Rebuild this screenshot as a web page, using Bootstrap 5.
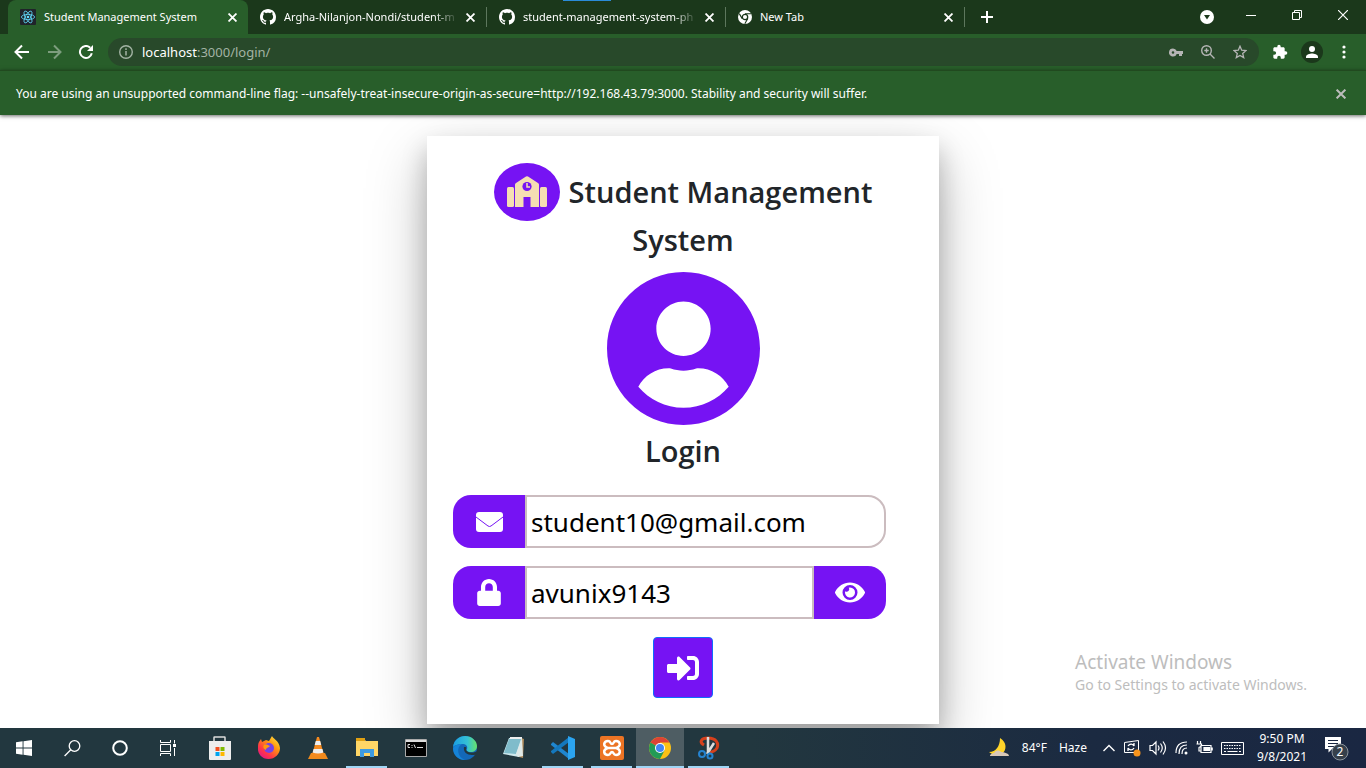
<!DOCTYPE html>
<html lang="en">
<head>
<meta charset="utf-8">
<meta name="viewport" content="width=device-width, initial-scale=1">
<title>Student Management System</title>
<link href="https://cdn.jsdelivr.net/npm/bootstrap@5.3.0/dist/css/bootstrap.min.css" rel="stylesheet">
<style>
  :root { --purple: #7613f3; --frame: #1b381b; --toolbar: #285e2a; }
  body { font-family: "Noto Sans", "Open Sans", sans-serif; font-size: 12px; line-height: 16px; }
  button { background: none; border: 0; padding: 0; color: inherit; display: inline-flex; align-items: center; justify-content: center; }
  svg { display: block; flex: none; }
  .tabstrip { background: var(--frame); color: #fff; height: 34px; padding-left: 8px; }
  .tab-item { width: 238px; padding: 0 11px 0 12px; color: #fff; font-size: 11px; }
  .tab-item a { color: inherit; text-decoration: none; white-space: nowrap; margin-left: 8px; flex: 1 1 0; min-width: 0; }
  .tab-item.current { background: var(--toolbar); border-radius: 8px 8px 0 0; width: 240px; }
  .tab-item.clipped a { -webkit-mask-image: linear-gradient(90deg, #000 calc(100% - 24px), transparent); mask-image: linear-gradient(90deg, #000 calc(100% - 24px), transparent); }
  .tab-sep { width: 1px; height: 20px; background: #5d775d; }
  .activity { left: 563px; top: 0; width: 48px; height: 1px; background: #2a8bd8; }
  .winctl button { width: 46px; height: 30px; }
  .winctl .tab-search { width: 42px; }
  .toolbar { background: var(--toolbar); color: #fff; height: 36px; padding: 0 12px; }
  .omnibox { background: #28492a; border-radius: 14px; height: 28px; padding: 0 12px 0 10px; margin: 0 13px 0 14px; }
  .omni-icons { gap: 18px; }
  .addr { font-size: 13px; color: #fff; margin-left: 8px; }
  .addr span { color: #a3b3a4; }
  .avatar { width: 22px; height: 22px; border-radius: 50%; background: #1b381b; margin: 0 19px 0 13px; }
  .infobar { background: var(--toolbar); color: #fff; border-top: 1px solid #21491f; height: 45px; padding: 1px 16px 0; box-shadow: 0 1px 4px rgba(0,0,0,.6); z-index: 2; }
  main { overflow: hidden; background: #fff; }
  .login-card { width: 512px; background: #fff; margin-top: 21px; margin-bottom: 4px; padding: 27px 26px 26px; box-shadow: 0 24px 56px rgba(0,0,0,.25), 0 14px 24px rgba(0,0,0,.22); }
  .login-card h1, .login-card h2 { font-family: "Open Sans", "Noto Sans", sans-serif; font-size: 29px; line-height: 36px; font-weight: 600; color: #212529; margin: 0; }
  .login-card h1 { line-height: 58px; }
  .login-card h1 .second { display: block; line-height: 38px; }
  .login-card h2 { margin: 8px 0; }
  .portrait { margin-top: 13px; }
  .school { width: 66px; height: 58px; border-radius: 50%; background: var(--purple); margin-right: 9px; }
  .fields { gap: 18px; padding-top: 18px; }
  .field { height: 53px; width: 433px; }
  .field .cap { width: 72px; background: var(--purple); color: #fff; }
  .field .cap-start { border-radius: 18px 0 0 18px; }
  .field .cap-end { border-radius: 0 18px 18px 0; }
  .field input { flex: 1; min-width: 0; border: 2px solid #cbbcbf; padding: 0 4px; font-size: 26px; color: #000; outline: 0; background: #fff; }
  .field .round-end { border-radius: 0 18px 18px 0; }
  .go { width: 60px; height: 61px; background: var(--purple); border: 1px solid #0d6efd; border-radius: 4px; color: #fff; }
  .watermark { right: 59px; bottom: 33px; color: #bdbdbd; font-size: 14px; line-height: 20px; }
  .watermark strong { display: block; font-weight: 400; font-size: 19px; line-height: 26px; }
  .taskbar { height: 40px; background: linear-gradient(90deg, #22373f 0%, #22373f 55%, #1b2a41 80%, #1a2742 100%); color: #fff; }
  .tb-item { width: 49px; height: 40px; }
  .tb-system { padding-right: 3px; }
  .tb-system .tb-item { width: 48px; }
  .tb-open { box-shadow: inset 0 -2px #9fd5f5; width: 41px; margin: 0 4px; }
  .tb-active { background-color: #4e5d63; width: 48px; margin: 0; }
  .weather { gap: 12px; }
  .clock { line-height: 18px; width: 60px; }
  .notes { margin-left: 12px; margin-right: 16px; }
</style>
</head>
<body class="min-vh-100 d-flex flex-column">
<svg width="0" height="0" class="position-absolute" aria-hidden="true">
  <symbol id="x" viewBox="0 0 8 8"><path d="M.5.5l7 7m0-7l-7 7" stroke="currentColor" stroke-width="1.6"/></symbol>
  <symbol id="github" viewBox="0 0 16 16"><path fill="currentColor" d="M8 0C3.58 0 0 3.58 0 8c0 3.54 2.29 6.53 5.47 7.59.4.07.55-.17.55-.38 0-.19-.01-.82-.01-1.49-2.01.37-2.53-.49-2.69-.94-.09-.23-.48-.94-.82-1.13-.28-.15-.68-.52-.01-.53.63-.01 1.08.58 1.23.82.72 1.21 1.87.87 2.33.66.07-.52.28-.87.51-1.07-1.78-.2-3.64-.89-3.64-3.95 0-.87.31-1.59.82-2.15-.08-.2-.36-1.02.08-2.12 0 0 .67-.21 2.2.82.64-.18 1.32-.27 2-.27s1.36.09 2 .27c1.53-1.04 2.2-.82 2.2-.82.44 1.1.16 1.92.08 2.12.51.56.82 1.27.82 2.15 0 3.07-1.87 3.75-3.65 3.95.29.25.54.73.54 1.48 0 1.07-.01 1.93-.01 2.2 0 .21.15.46.55.38A8.01 8.01 0 0 0 16 8c0-4.42-3.58-8-8-8z"/></symbol>
</svg>

<header class="position-relative">
  <div class="tabstrip d-flex align-items-center">
    <div class="tab-item current d-flex align-items-center h-100">
      <svg width="16" height="16" viewBox="0 0 16 16"><rect width="16" height="16" rx="1" fill="#20232a"/><g fill="none" stroke="#61dafb" stroke-width=".8"><ellipse cx="8" cy="8" rx="6.6" ry="2.6"/><ellipse cx="8" cy="8" rx="6.6" ry="2.6" transform="rotate(60 8 8)"/><ellipse cx="8" cy="8" rx="6.6" ry="2.6" transform="rotate(120 8 8)"/></g><circle cx="8" cy="8" r="1.3" fill="#61dafb"/></svg>
      <a href="#">Student Management System</a>
      <button type="button" aria-label="Close tab"><svg width="9" height="9"><use href="#x"/></svg></button>
    </div>
    <div class="tab-item clipped d-flex align-items-center h-100">
      <svg width="16" height="16"><use href="#github"/></svg>
      <a href="#">Argha-Nilanjon-Nondi/student-m</a>
      <button type="button" class="ms-2" aria-label="Close tab"><svg width="9" height="9"><use href="#x"/></svg></button>
    </div>
    <span class="tab-sep"></span>
    <div class="tab-item clipped d-flex align-items-center h-100">
      <svg width="16" height="16"><use href="#github"/></svg>
      <a href="#">student-management-system-ph</a>
      <button type="button" class="ms-2" aria-label="Close tab"><svg width="9" height="9"><use href="#x"/></svg></button>
    </div>
    <span class="tab-sep"></span>
    <div class="tab-item d-flex align-items-center h-100">
      <svg width="14" height="14" viewBox="0 0 14 14"><circle cx="7" cy="7" r="7" fill="#fff"/><circle cx="7" cy="7" r="2.7" fill="#fff" stroke="#1b381b" stroke-width="1.3"/><path d="M7 3.8h6M4.2 8.6L1.3 3.6M9.8 8.6L6.8 13.8" stroke="#1b381b" stroke-width="1.1"/></svg>
      <a href="#">New Tab</a>
      <button type="button" aria-label="Close tab"><svg width="9" height="9"><use href="#x"/></svg></button>
    </div>
    <span class="tab-sep"></span>
    <button type="button" class="ms-3" aria-label="New tab"><svg width="12" height="12" viewBox="0 0 12 12"><path d="M6 0v12M0 6h12" stroke="#fff" stroke-width="2"/></svg></button>
    <div class="winctl d-flex ms-auto align-items-center h-100">
      <button type="button" class="tab-search" aria-label="Search tabs"><svg width="14" height="14" viewBox="0 0 14 14"><circle cx="7" cy="7" r="7" fill="#fff"/><path d="M4 5h6L7 9.5z" fill="#1b381b"/></svg></button>
      <button type="button" class="align-self-start" aria-label="Minimize"><svg width="10" height="10"><path d="M0 5.5h10" stroke="#fff"/></svg></button>
      <button type="button" class="align-self-start" aria-label="Restore"><svg width="10" height="10" fill="none" stroke="#fff"><path d="M.5 2.5h7v7h-7zM2.5 2.5v-2h7v7h-2"/></svg></button>
      <button type="button" class="align-self-start" aria-label="Close"><svg width="10" height="10"><path d="M0 0l10 10M10 0L0 10" stroke="#fff" stroke-width="1.2"/></svg></button>
    </div>
    <span class="activity position-absolute"></span>
  </div>
  <nav class="toolbar d-flex align-items-center">
    <button type="button" class="me-3" aria-label="Back"><svg width="20" height="16" viewBox="0 0 20 16" fill="none" stroke="#fff" stroke-width="2"><path d="M17 8H4M10 1.5L3.5 8l6.500 6.500"/></svg></button>
    <button type="button" class="me-3" aria-label="Forward"><svg width="14" height="16" viewBox="0 0 14 16" fill="none" stroke="#7d9d7e" stroke-width="2"><path d="M0 8h12M6 1.500L12.500 8 6 14.500"/></svg></button>
    <button type="button" aria-label="Reload"><svg width="16" height="14" viewBox="0 0 16 14"><path d="M13.800 8.300A6 6 0 1 1 12.200 2.700" fill="none" stroke="#fff" stroke-width="2"/><path d="M15 0v6H9z" fill="#fff"/></svg></button>
    <div class="omnibox d-flex align-items-center flex-grow-1">
      <svg width="16" height="14" viewBox="0 0 16 14"><circle cx="8" cy="7" r="6.300" fill="none" stroke="#a3b3a4" stroke-width="1.400"/><path d="M8 6v4.500M8 3.300v1.600" stroke="#a3b3a4" stroke-width="1.500"/></svg>
      <div class="addr me-auto">localhost<span>:3000/login/</span></div>
      <div class="omni-icons d-flex align-items-center">
        <svg width="14" height="9" viewBox="0 0 14 9"><path fill="#b5b5b5" fill-rule="evenodd" d="M4 .500a4 4 0 1 0 3.700 5.400H10V8h3V5.900h1V3.100H7.700A4 4 0 0 0 4 .500zM4 3.200a1.300 1.300 0 1 1 0 2.600 1.300 1.300 0 0 1 0-2.600z"/></svg>
        <svg width="14" height="14" fill="none" stroke="#b5b5b5" stroke-width="1.400"><circle cx="5.500" cy="5.500" r="4.800"/><path d="M9 9l4.500 4.500M5.500 3.300v4.400M3.300 5.500h4.400"/></svg>
        <svg width="14" height="14" viewBox="0 0 14 14" fill="none" stroke="#b5b5b5" stroke-width="1.300"><path d="M7 1.200l1.700 4 4.300.400-3.300 2.800 1 4.200L7 10.400l-3.700 2.200 1-4.200L1 5.600l4.300-.400z"/></svg>
      </div>
    </div>
    <button type="button" aria-label="Extensions"><svg width="16" height="16" viewBox="0 0 24 24"><path fill="#fff" d="M20.500 11H19V7c0-1.100-.900-2-2-2h-4V3.500a2.500 2.500 0 0 0-5 0V5H4c-1.100 0-2 .900-2 2v3.800h1.500a2.700 2.700 0 0 1 0 5.400H2V20c0 1.100.900 2 2 2h3.800v-1.500a2.700 2.700 0 0 1 5.400 0V22H17c1.100 0 2-.900 2-2v-4h1.500a2.500 2.500 0 0 0 0-5z"/></svg></button>
    <button type="button" class="avatar" aria-label="Profile"><svg width="12" height="12"><circle cx="6" cy="3" r="3" fill="#fff"/><path d="M0 12v-1.500C0 8.500 4 7.400 6 7.400s6 1.100 6 3.100V12z" fill="#fff"/></svg></button>
    <button type="button" class="me-2" aria-label="Menu"><svg width="4" height="14" fill="#fff"><circle cx="2" cy="2" r="1.600"/><circle cx="2" cy="7" r="1.600"/><circle cx="2" cy="12" r="1.600"/></svg></button>
  </nav>
  <div class="infobar d-flex align-items-center justify-content-between position-relative">
    <span>You are using an unsupported command-line flag: --unsafely-treat-insecure-origin-as-secure=http://192.168.43.79:3000. Stability and security will suffer.</span>
    <button type="button" class="me-1" aria-label="Dismiss"><svg width="10" height="10" color="#bcbcbc"><use href="#x"/></svg></button>
  </div>
</header>

<main class="flex-grow-1 d-flex justify-content-center align-items-start position-relative">
  <form class="login-card d-flex flex-column align-items-center text-center">
    <h1>
      <span class="d-flex align-items-center">
        <span class="school d-flex align-items-center justify-content-center">
          <svg width="40" height="32" viewBox="0 0 40 32"><g fill="#f5deb3"><rect x="0" y="11" width="7" height="20" rx="1.500"/><rect x="33" y="11" width="7" height="20" rx="1.500"/><path d="M8 31V8.500Q8 7.500 9 7L19 .500q1-.600 2 0L31 7q1 .500 1 1.500V31h-8.500v-10h-7V31z"/></g><circle cx="20" cy="10.500" r="4.600" fill="#7613f3"/><path d="M20 7v4h3" fill="none" stroke="#f5deb3" stroke-width="1.500"/></svg>
        </span>Student Management</span>
      <span class="second">System</span>
    </h1>
    <svg class="portrait" width="153" height="153" viewBox="0 8 496 496"><path fill="#7613f3" d="M248 8C111 8 0 119 0 256s111 248 248 248 248-111 248-248S385 8 248 8zm0 96c48.600 0 88 39.400 88 88s-39.400 88-88 88-88-39.400-88-88 39.400-88 88-88zm0 344c-58.700 0-111.300-26.600-146.500-68.200 18.800-35.400 55.600-59.800 98.500-59.800 2.400 0 4.800.4 7.100 1.100 13 4.200 26.600 6.900 40.900 6.900 14.300 0 28-2.700 40.900-6.900 2.300-.7 4.700-1.100 7.100-1.100 42.900 0 79.700 24.400 98.500 59.800C359.300 421.400 306.700 448 248 448z"/></svg>
    <h2>Login</h2>
    <div class="fields d-flex flex-column align-items-center w-100">
      <div class="field d-flex align-self-start">
        <label class="cap cap-start d-flex align-items-center justify-content-center" for="email" aria-label="Email"><svg width="27" height="20"><rect width="27" height="20" rx="3" fill="#fff"/><path d="M0 5l12 9q1.500 1 3 0l12-9" fill="none" stroke="#7613f3"/></svg></label>
        <input id="email" type="text" class="round-end" value="student10@gmail.com">
      </div>
      <div class="field d-flex align-self-start">
        <label class="cap cap-start d-flex align-items-center justify-content-center" for="pass" aria-label="Password"><svg width="24" height="27" viewBox="0 0 448 512"><path fill="#fff" d="M400 224h-24v-72C376 68.200 307.800 0 224 0S72 68.200 72 152v72H48c-26.500 0-48 21.500-48 48v192c0 26.500 21.500 48 48 48h352c26.500 0 48-21.500 48-48V272c0-26.500-21.500-48-48-48zm-104 0H152v-72c0-39.700 32.300-72 72-72s72 32.300 72 72v72z"/></svg></label>
        <input id="pass" type="text" value="avunix9143">
        <button type="button" class="cap cap-end" aria-label="Show password"><svg width="30" height="27" viewBox="0 0 576 512"><path fill="#fff" d="M572.520 241.400C518.290 135.590 410.930 64 288 64S57.680 135.640 3.480 241.410a32.350 32.350 0 0 0 0 29.190C57.710 376.410 165.070 448 288 448s230.320-71.640 284.520-177.410a32.350 32.350 0 0 0 0-29.190zM288 400a144 144 0 1 1 144-144 143.930 143.930 0 0 1-144 144zm0-240a95.310 95.310 0 0 0-25.310 3.790 47.850 47.850 0 0 1-66.900 66.900A95.780 95.780 0 1 0 288 160z"/></svg></button>
      </div>
      <button type="submit" class="go" aria-label="Log in"><svg width="32" height="32" viewBox="0 0 512 512"><path fill="#fff" d="M416 448h-84c-6.600 0-12-5.400-12-12v-40c0-6.600 5.400-12 12-12h84c17.700 0 32-14.300 32-32V160c0-17.700-14.300-32-32-32h-84c-6.600 0-12-5.400-12-12V76c0-6.600 5.400-12 12-12h84c53 0 96 43 96 96v192c0 53-43 96-96 96zm-47-201L201 79c-15-15-41-4.500-41 17v96H24c-13.300 0-24 10.700-24 24v96c0 13.300 10.700 24 24 24h136v96c0 21.500 26 32 41 17l168-168c9.300-9.400 9.300-24.600 0-34z"/></svg></button>
    </div>
  </form>
  <div class="watermark position-absolute"><strong>Activate Windows</strong>Go to Settings to activate Windows.</div>
</main>

<footer class="taskbar d-flex align-items-center">
  <div class="tb-system d-flex">
    <button type="button" class="tb-item" aria-label="Start"><svg width="16" height="16" fill="#fff"><path d="M0 2.200L6.600 1.300v6.200H0zM7.500 1.200L16 0v7.500H7.500zM0 8.500h6.600v6.200L0 13.800zM7.500 8.500H16V16l-8.500-1.200z"/></svg></button>
    <button type="button" class="tb-item" aria-label="Search"><svg width="17" height="17" fill="none" stroke="#fff" stroke-width="1.300"><circle cx="10.500" cy="6" r="5.300"/><path d="M6.800 9.800L.600 16"/></svg></button>
    <button type="button" class="tb-item" aria-label="Cortana"><svg width="16" height="16"><circle cx="8" cy="8" r="6.800" fill="none" stroke="#fff" stroke-width="2"/></svg></button>
    <button type="button" class="tb-item" aria-label="Task view"><svg width="16" height="16" fill="none" stroke="#fff"><path d="M.5 0v2.500h10V0M.5 4.500h10v7H.500zM.5 16v-2.500h10V16M14.500 0v3.500M14.500 8v8"/><path d="M13 4h3v3h-3z" fill="#fff" stroke="none"/></svg></button>
  </div>
  <button type="button" class="tb-item" aria-label="Store"><svg width="24" height="24"><path d="M6 6V1.500Q6 1 6.500 1h10q.5 0 .5.500V6" fill="none" stroke="#ddd" stroke-width="1.500"/><path d="M1 5h22v18q0 1-1 1H2q-1 0-1-1z" fill="#eee"/><path d="M7.500 11h4v4h-4z" fill="#f25022"/><path d="M12.500 11h4v4h-4z" fill="#7fba00"/><path d="M7.500 16h4v4h-4z" fill="#00a4ef"/><path d="M12.500 16h4v4h-4z" fill="#ffb900"/></svg></button>
  <button type="button" class="tb-item" aria-label="Firefox"><svg width="24" height="24"><defs><linearGradient id="ff" x1="1" y1="0" x2=".2" y2="1"><stop offset="0" stop-color="#fff44f"/><stop offset=".4" stop-color="#ff980e"/><stop offset=".75" stop-color="#ff3647"/><stop offset="1" stop-color="#e31587"/></linearGradient></defs><path d="M2 6l2-3 1 3 4-2 3 1 3-5c1 3 7 4 8 12 0 6-5 11-11.500 11S.500 18 1 12c0-3 0-4 1-6z" fill="url(#ff)"/><circle cx="12" cy="12" r="5" fill="#7542e5"/><path d="M7 9c2-1 4 0 6 1-1 2-4 1-4 4-3-1-3-4-2-5z" fill="#ff980e"/></svg></button>
  <button type="button" class="tb-item" aria-label="VLC"><svg width="22" height="24"><path d="M4 17h14l3 6H1z" fill="#f08a1c"/><path d="M10 1h2l5 18q-6 3-12 0z" fill="#f58a1f"/><path d="M8.800 5h4.400l1 4H7.700zM6.600 13h8.800l1 3.500q-5.400 2-10.800 0z" fill="#eee"/></svg></button>
  <button type="button" class="tb-item tb-open" aria-label="File Explorer"><svg width="22" height="20"><path d="M0 1h8l2 2h12v15H0z" fill="#ffd666"/><path d="M0 0h9v3H0z" fill="#e0a012"/><path d="M4 11h14v8h-4v-4H8v4H4z" fill="#3d9be0"/></svg></button>
  <button type="button" class="tb-item" aria-label="Command prompt"><svg width="22" height="18"><path d="M.5.5h21v17H.500z" fill="#000" stroke="#aaa"/><path d="M1 1h20v2H1z" fill="#ddd"/><path d="M5 5.500H3v3h2M7 6v1m0 1v1M9 5.500l1.500 3.500M12 8.500h6" fill="none" stroke="#ddd"/></svg></button>
  <button type="button" class="tb-item" aria-label="Edge"><svg width="24" height="24"><defs><linearGradient id="eg"><stop offset="0" stop-color="#1b9de2"/><stop offset=".6" stop-color="#35c1d5"/><stop offset="1" stop-color="#67e26a"/></linearGradient></defs><circle cx="12" cy="12" r="12" fill="#1368b8"/><path d="M0 11C1 4 6 0 12 0c7 0 12 5 12 10 0 4-3 6-6 6-4 0-5-1-4-3 1-3-1-5-5-5-5 0-8 2-9 3z" fill="url(#eg)"/><path d="M11 11c-1 5 3 8 8 8 2 0 3 0 4-1l1-3c-3 2-8 2-10 0-2-1 0-3-1-4z" fill="#22373f"/><path d="M9 8c-6 3-5 13 3 16C4 24 0 18 0 12c2-3 5-4 9-4z" fill="#1583d8"/></svg></button>
  <button type="button" class="tb-item" aria-label="Notepad"><svg width="23" height="22"><path d="M19 1l3 1-1 19-4-1z" fill="#b08a5a"/><path d="M7 1h13l-3 19L1 17z" fill="#cfe9ee"/><path d="M7 2h12l-5 15-12-1z" fill="#7fbccb"/><path d="M8 1h12" stroke="#eee" stroke-width="2"/><path d="M20 1l1 18-5 1-2-3z" fill="#dfe9e8"/></svg></button>
  <button type="button" class="tb-item tb-open" aria-label="Visual Studio Code"><svg width="24" height="24"><path d="M0 8l2-2 16 12v5L0 9z" fill="#1f86cf"/><path d="M0 16l2 2L18 6V1L0 15z" fill="#1478bd"/><path d="M17 0l7 3v18l-7 3z" fill="#2ba4f0"/></svg></button>
  <button type="button" class="tb-item tb-open" aria-label="XAMPP"><svg width="24" height="24"><rect width="24" height="24" rx="2" fill="#ec7424"/><path d="M8 12c-6-2-4-7 0-7 3 0 2 3 4 3s1-3 4-3c4 0 6 5 0 7 6 2 4 7 0 7-3 0-2-3-4-3s-1 3-4 3c-4 0-6-5 0-7zM8 12h8" fill="none" stroke="#fff" stroke-width="2.500"/></svg></button>
  <button type="button" class="tb-item tb-open tb-active" aria-label="Chrome"><svg width="22" height="22" viewBox="0 0 22 22"><circle cx="11" cy="11" r="11" fill="#fbc116"/><path d="M11 11L1.500 5.500A11 11 0 0 1 20.500 5.500H11z" fill="#dc4335"/><path d="M11 11L1.500 5.500A11 11 0 0 0 11 22l4.500-8.500z" fill="#239b56"/><circle cx="11" cy="11" r="5" fill="#fff"/><circle cx="11" cy="11" r="4" fill="#4285f4"/></svg></button>
  <button type="button" class="tb-item tb-open" aria-label="Snipping tool"><svg width="22" height="24" fill="none"><path d="M6 9C1 6 3 2 10 2c8 0 11 5 9 10-2 3-4 4-7 4" stroke="#d5401c" stroke-width="3"/><path d="M10 1v15M16 7l-7 11" stroke="#ddd" stroke-width="2.500"/><circle cx="4" cy="18" r="3" stroke="#2583d0" stroke-width="2"/><circle cx="12" cy="20" r="2.500" stroke="#2583d0" stroke-width="2"/></svg></button>
  <div class="ms-auto d-flex align-items-center">
    <div class="weather d-flex align-items-center">
      <svg width="22" height="20"><path d="M12 0c7 4 7 12 2 16H4l-3-2C8 14 12 8 12 0z" fill="#ffd42a"/><path d="M2 18c0-3 4-2 5-4 1-2 5-2 6 0 2 0 8 1 8 4z" fill="#d9c8b8"/></svg>
      <span>84°F</span><span>Haze</span>
    </div>
    <svg class="ms-3" width="12" height="8" fill="none" stroke="#fff" stroke-width="1.400"><path d="M.5 7L6 1.500 11.500 7"/></svg>
    <svg class="ms-2" width="18" height="18" fill="none" stroke="#fff"><path d="M1.500 3.500l14-2v12h-14z"/><path d="M5 7c2-3 5-2 6 0V4M11 9c-2 3-5 2-6 0v3" stroke-width="1.300"/><circle cx="14" cy="14" r="3.500" fill="#f7941d" stroke="none"/></svg>
    <svg class="ms-2" width="18" height="16" fill="none" stroke="#fff" stroke-width="1.200"><path d="M1 5.500h2.500L7 2v12l-3.500-3.500H1zM9 5.500q2 2.500 0 5M11.500 3.500q3.500 4.500 0 9M14 1.500q5 6.500 0 13"/></svg>
    <svg class="ms-2" width="13" height="14" fill="none" stroke="#fff" stroke-width="1.200"><path d="M1 12Q1 1 12 1M4 13Q4 4 12 4M7 13Q7 7 12 7" /><circle cx="11" cy="12" r="1.500" fill="#fff" stroke="none"/></svg>
    <svg class="ms-2" width="17" height="14" fill="none" stroke="#fff" stroke-width="1.200"><path d="M5 4.500h10v7H5zM16.200 6.500v3M1.500 0v3M4.500 0v3M.500 3h5v2l-2.500 1.500V10H5"/><path d="M8 6.500h5.500v3H8z" fill="#fff"/></svg>
    <svg class="ms-2" width="23" height="13" fill="none" stroke="#fff"><path d="M.5.500h22v12H.500z"/><path d="M3 3.500h17M3 6.500h17" stroke-dasharray="1.500 1"/><path d="M3 9.500h2m1.500 0h10m1.500 0h2"/></svg>
    <div class="clock text-center ms-2">9:50 PM<br>9/8/2021</div>
    <svg class="notes" width="26" height="26"><path d="M1 2h16v12H8l-3.500 3.500V14H1z" fill="#fff"/><path d="M4 5.500h10M4 8.500h10M4 11.500h6" stroke="#1a2742"/><circle cx="16" cy="17" r="8" fill="#36404b" stroke="#8b949d"/><text x="16" y="21" text-anchor="middle" font-size="12" fill="#fff">2</text></svg>
  </div>
</footer>
<script src="https://cdn.jsdelivr.net/npm/bootstrap@5.3.0/dist/js/bootstrap.bundle.min.js"></script>
</body>
</html>
